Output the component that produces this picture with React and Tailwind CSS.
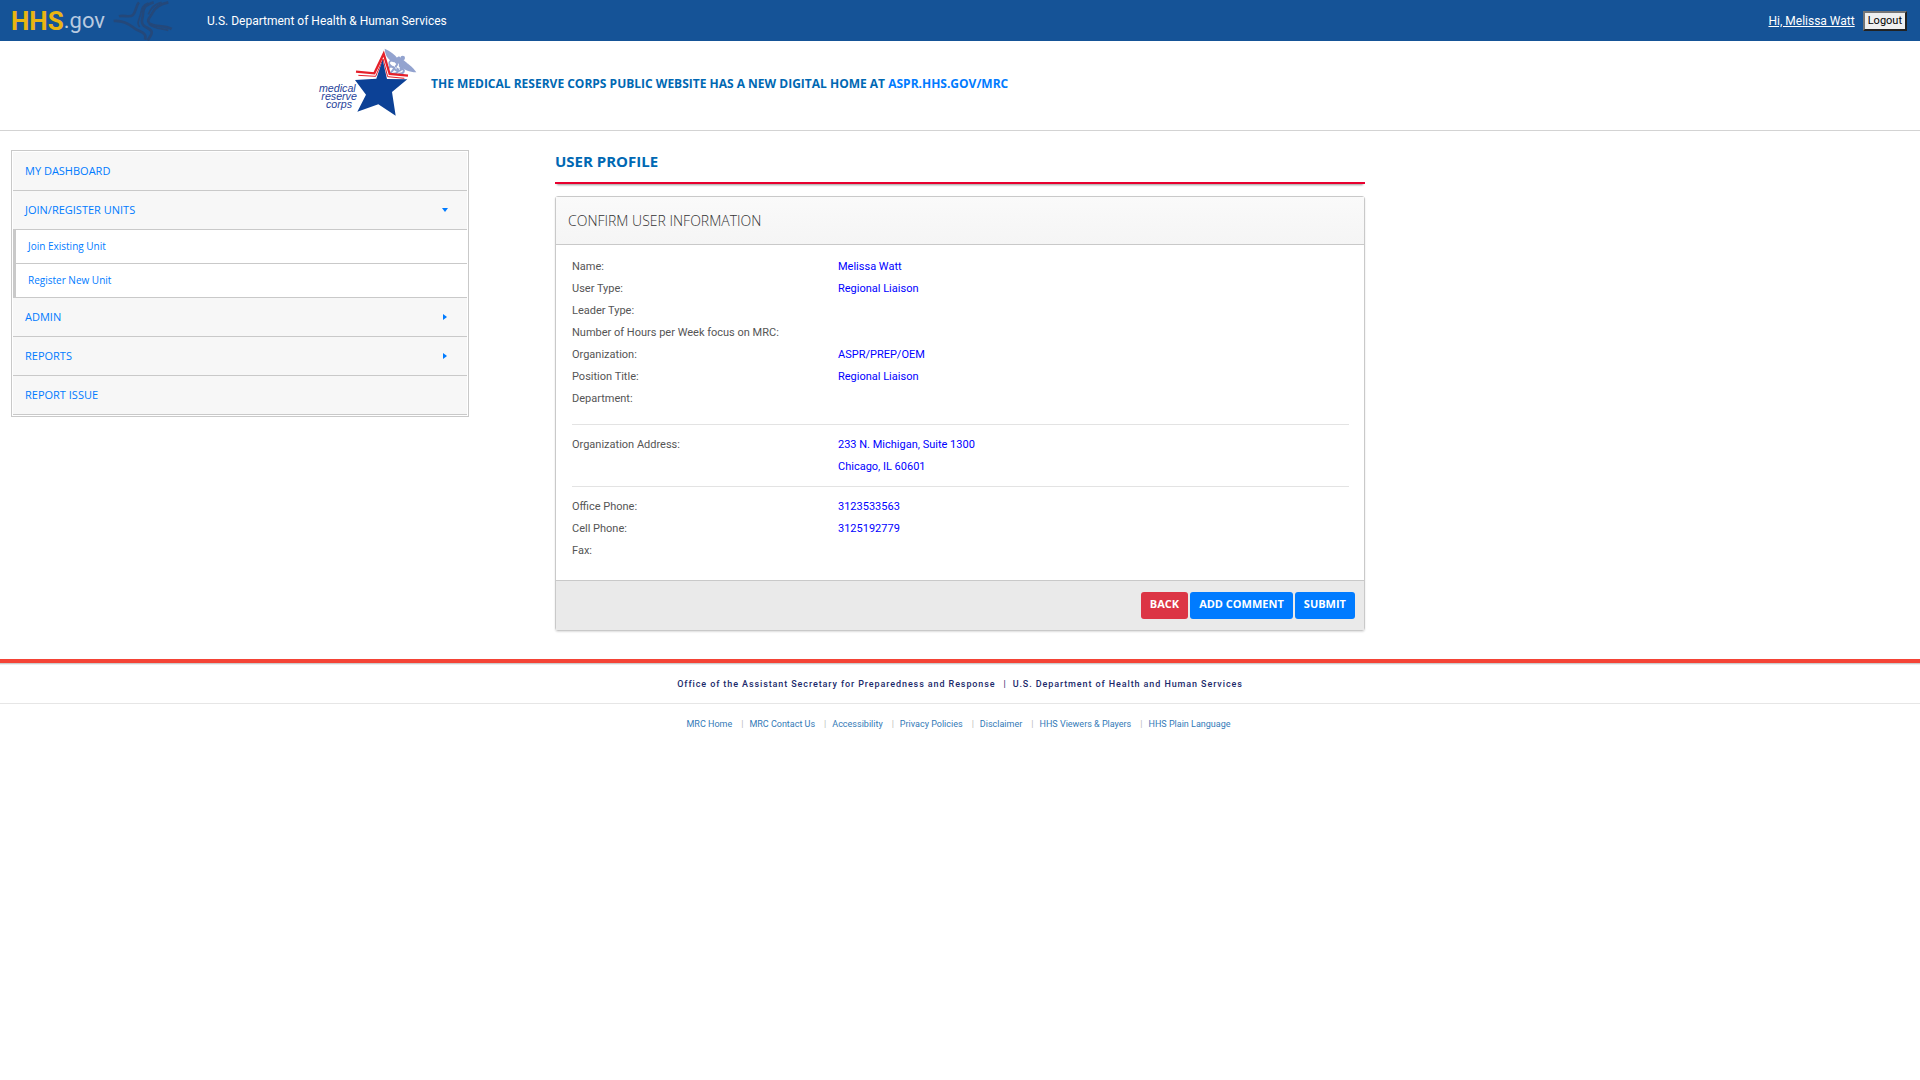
import { useState } from 'react'

const SUB_UNITS = ['Join Existing Unit', 'Register New Unit']

const PROFILE = [
  { label: 'Name:', value: 'Melissa Watt' },
  { label: 'User Type:', value: 'Regional Liaison' },
  { label: 'Leader Type:', value: '' },
  { label: 'Number of Hours per Week focus on MRC:', value: '' },
  { label: 'Organization:', value: 'ASPR/PREP/OEM' },
  { label: 'Position Title:', value: 'Regional Liaison' },
  { label: 'Department:', value: '' },
]

const ADDRESS = [
  { label: 'Organization Address:', value: '233 N. Michigan, Suite 1300' },
  { label: '', value: 'Chicago, IL 60601' },
]

const PHONES = [
  { label: 'Office Phone:', value: '3123533563' },
  { label: 'Cell Phone:', value: '3125192779' },
  { label: 'Fax:', value: '' },
]

const FOOTER_LINKS = [
  'MRC Home',
  'MRC Contact Us',
  'Accessibility',
  'Privacy Policies',
  'Disclaimer',
  'HHS Viewers & Players',
  'HHS Plain Language',
]

function EagleMark() {
  return (
    <svg viewBox="0 0 180 120" className="w-[60px] h-10" fill="none" stroke="#24487a" strokeWidth="8" aria-hidden="true">
      <path d="M78 4 C68 14 70 30 60 42 C48 52 34 40 18 46" />
      <path d="M2 60 C26 58 44 66 62 80 C78 94 104 92 96 116" />
      <path d="M122 4 C98 10 90 20 90 38 C90 56 80 62 92 74 C106 84 122 86 114 102 L104 118" />
      <path d="M106 6 C84 14 86 28 82 42 C78 58 70 66 80 78" strokeWidth="5" />
      <path d="M166 4 C136 10 124 22 118 36 C112 50 98 56 110 68 C130 80 152 70 176 84" />
      <path d="M146 4 C118 12 112 26 106 40" strokeWidth="5" />
      <path d="M108 70 C126 84 146 82 166 88" strokeWidth="5" />
    </svg>
  )
}

function MrcLogo() {
  return (
    <svg viewBox="50 22 300 210" className="w-[100px] h-[70px] mb-2" role="img" aria-label="Medical Reserve Corps">
      {/* caduceus */}
      <g fill="#93a3cf">
        <path d="M253 27 C254 46 262 60 280 68 L294 60 C284 44 270 34 253 27 Z" />
        <path d="M348 98 C326 98 312 90 296 80 L304 64 C320 68 336 80 348 98 Z" />
        <path d="M276 62 L296 50 L320 70 L300 84 Z" />
        <circle cx="307" cy="55" r="7" />
      </g>
      <g fill="none" stroke="#93a3cf" strokeWidth="6">
        <path d="M303 58 L268 104" />
        <path d="M286 62 C262 60 262 78 280 82 C300 86 296 102 278 102" />
        <path d="M302 76 C310 98 288 98 280 84 C270 72 254 92 268 104" />
        <path d="M298 84 C320 90 310 104 294 102" />
      </g>
      <g fill="none" stroke="#fff" strokeWidth="3">
        <path d="M272 66 C266 74 276 76 284 80" />
        <path d="M294 72 C296 82 290 88 284 84" />
      </g>
      {/* double red line above the star */}
      <path d="M168 103 L225 109 L249 50 L264 110 L316 113" fill="none" stroke="#fff" strokeWidth="14" />
      <path d="M167 96 L222 101 L250 42 L268 103 L323 108" fill="none" stroke="#e5202a" strokeWidth="7" />
      <path d="M174 107 L226 110 L248 58 L262 111 L312 116" fill="none" stroke="#e5202a" strokeWidth="3" />
      <path
        d="M247 60 L260 118 L321 119 L275 157 L286 228 L234 194 L171 216 L197 165 L164 121 L228 117 Z"
        fill="#0c4196"
      />
      <g
        fill="#263f9a"
        className="italic"
        fontFamily="'Liberation Sans', Arial, sans-serif"
        fontSize="32"
      >
        <text x="56" y="157">medical</text>
        <text x="63" y="181">reserve</text>
        <text x="77" y="205">corps</text>
      </g>
    </svg>
  )
}

function Caret({ open }) {
  return (
    <svg viewBox="0 0 6 6" className="w-[6px] h-[6px]" fill="currentColor" aria-hidden="true">
      {open ? <path d="M0 1 H6 L3 5 Z" /> : <path d="M1 0 L5 3 L1 6 Z" />}
    </svg>
  )
}

function NavLink({ children }) {
  return (
    <a href="#" className="flex items-center h-[39px] px-3 border-b border-[#c9c9c9] bg-[#f7f7f7] hover:bg-white">
      {children}
    </a>
  )
}

function NavGroup({ title, items = [], defaultOpen = false }) {
  const [open, setOpen] = useState(defaultOpen)
  return (
    <div>
      <button
        type="button"
        aria-expanded={open}
        onClick={() => setOpen(!open)}
        className="flex items-center justify-between w-full h-[39px] pl-3 pr-[19px] border-b border-[#c9c9c9] bg-[#f7f7f7]"
      >
        {title}
        <Caret open={open} />
      </button>
      {open && items.length > 0 && (
        <div className="border-l-3 border-[#c9c9c9] text-[10px]">
          {items.map((item) => (
            <a key={item} href="#" className="flex items-center h-[34px] px-3 border-b border-[#c9c9c9]">
              {item}
            </a>
          ))}
        </div>
      )}
    </div>
  )
}

function FieldList({ rows }) {
  return (
    <dl className="text-[11px] leading-[22px]">
      {rows.map((row, i) => (
        <div key={i} className="flex">
          <dt className="w-[266px] shrink-0 text-[#555]">{row.label}</dt>
          <dd className="text-[#00f]">{row.value}</dd>
        </div>
      ))}
    </dl>
  )
}

function ActionButton({ color, children }) {
  return (
    <button type="button" className={`h-[27px] px-[9px] pb-[2px] rounded-[3px] text-[11px] font-bold text-white ${color}`}>
      {children}
    </button>
  )
}

export default function App() {
  return (
    <div className="bg-white font-[Roboto,sans-serif] text-[#555]">
      <header className="flex items-center h-[41px] pl-[11px] pr-[13px] bg-[#155397] text-white">
        <a href="#" className="flex items-center">
          <span className="text-[26px] leading-10 font-bold text-[#e9b512]">HHS</span>
          <span className="text-[22px] leading-10 text-[#b9cae0]">.gov</span>
        </a>
        <div className="ml-2">
          <EagleMark />
        </div>
        <span className="ml-[34px] text-xs">U.S. Department of Health &amp; Human Services</span>
        <a href="#" className="ml-auto text-xs underline">Hi, Melissa Watt</a>
        <button
          type="button"
          className="ml-2 h-5 px-[3px] border-2 border-t-[#767676] border-l-[#767676] border-r-[#222] border-b-[#222] bg-[#efefef] text-[11px] leading-4 text-black"
        >
          Logout
        </button>
      </header>

      <div className="flex items-center h-[90px] pl-[317px] border-b border-[#d3d3d3]">
        <MrcLogo />
        <p className="ml-[14px] pb-1 font-['Open_Sans',sans-serif] text-xs font-bold text-[#0068b3]">
          THE MEDICAL RESERVE CORPS PUBLIC WEBSITE HAS A NEW DIGITAL HOME AT{' '}
          <a href="#" className="text-[#007bff]">ASPR.HHS.GOV/MRC</a>
        </p>
      </div>

      <div className="flex items-start pt-[19px] pb-7">
        <aside className="w-1/4 px-[11px]">
          <nav className="p-px border border-[#c9c9c9] font-['Open_Sans',sans-serif] text-[11px] text-[#007bff]">
            <NavLink>MY DASHBOARD</NavLink>
            <NavGroup title="JOIN/REGISTER UNITS" items={SUB_UNITS} defaultOpen />
            <NavGroup title="ADMIN" />
            <NavGroup title="REPORTS" />
            <NavLink>REPORT ISSUE</NavLink>
          </nav>
        </aside>

        <main className="w-1/2 px-[75px]">
          <h1 className="h-[34px] border-b-2 border-[#e8002f] shadow-[0_3px_2px_-2px_#999] font-['Open_Sans',sans-serif] text-[15px] leading-[22px] font-bold text-[#0068b3] mb-3">
            USER PROFILE
          </h1>
          <section className="rounded-[3px] border border-[#c9c9c9] shadow-[0_1px_2px_#ddd]">
            <h2 className="px-3 border-b border-[#c9c9c9] bg-linear-to-b from-[#fafafa] to-[#f5f5f5] font-['Open_Sans',sans-serif] text-sm leading-[47px] font-light text-[#333]">
              CONFIRM USER INFORMATION
            </h2>
            <div className="pl-4 pr-[15px] pt-[11px] pb-[18px]">
              <FieldList rows={PROFILE} />
              <hr className="mt-[14px] mb-[9px] border-[#e3e3e3]" />
              <FieldList rows={ADDRESS} />
              <hr className="mt-2 mb-[9px] border-[#e3e3e3]" />
              <FieldList rows={PHONES} />
            </div>
            <div className="flex justify-end gap-[2px] pt-[11px] pr-[9px] pb-[11px] border-t border-[#c9c9c9] bg-[#eaeaea] font-['Open_Sans',sans-serif]">
              <ActionButton color="bg-[#dc3545]">BACK</ActionButton>
              <ActionButton color="bg-[#007bff]">ADD COMMENT</ActionButton>
              <ActionButton color="bg-[#007bff]">SUBMIT</ActionButton>
            </div>
          </section>
        </main>
      </div>

      <footer className="border-t-4 border-[#f44336]">
        <div className="h-[2px] bg-linear-to-b from-[#bbb] to-white" />
        <p className="flex justify-center h-[39px] items-center pt-[2px] border-b border-[#e6e6e6] text-[9px] font-medium tracking-widest text-[#1b2a6b]">
          Office of the Assistant Secretary for Preparedness and Response
          <span className="pl-2 pr-[6px] font-normal">|</span>
          U.S. Department of Health and Human Services
        </p>
        <ul className="flex justify-center pt-3 pr-[3px] text-[9px] leading-4 text-[#337ab7]">
          {FOOTER_LINKS.map((link, i) => (
            <li key={link} className="flex">
              {i > 0 && <span className="pl-[9px] pr-[6px] text-[#bbb]">|</span>}
              <a href="#">{link}</a>
            </li>
          ))}
        </ul>
      </footer>
    </div>
  )
}
